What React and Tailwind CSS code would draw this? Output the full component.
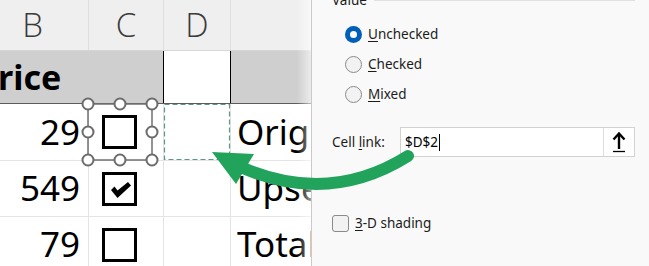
import React from "react";

const rows = [
  { n: "29", checked: false, e: "Original price", h: "h-[57px]" },
  { n: "549", checked: true, e: "Upsell", h: "h-[56px]" },
  { n: "79", checked: false, e: "Total", h: "h-[56px]" },
];

function Box({ checked }) {
  return (
    <div className="ml-[13px] w-[35px] h-[34px] border-[3px] border-black bg-white relative">
      {checked && (
        <svg width="29" height="28" viewBox="0 0 29 28" className="absolute left-0 top-0">
          <polygon points="6,15 9.5,11.5 12.5,15.5 23,7 26,10.5 12.5,23" fill="#000" />
        </svg>
      )}
    </div>
  );
}

function Radio({ selected, children }) {
  return (
    <div className="flex items-center h-[30px] pl-[13px]">
      {selected ? (
        <div className="w-[17px] h-[17px] rounded-full bg-[#005fb8] flex items-center justify-center">
          <div className="w-[7px] h-[7px] rounded-full bg-white" />
        </div>
      ) : (
        <div className="w-[17px] h-[17px] rounded-full border border-[#8a8a8a] bg-[#f2f2f2]" />
      )}
      <span className="ml-[6px] text-[13.5px] text-[#1b1b1b] whitespace-nowrap">{children}</span>
    </div>
  );
}

export default function App() {
  return (
    <div className="relative w-[649px] h-[266px] overflow-hidden flex bg-white font-['Noto_Sans',sans-serif]">
      {/* Spreadsheet */}
      <div className="relative w-[311px] flex-none overflow-hidden bg-white">
        {/* column header */}
        <div className="flex h-[51px] bg-[#efefef] border-b border-[#d6d6d6] text-[33px] font-light text-[#3a3a3a] font-['Open_Sans',sans-serif]">
          <div className="w-[89px] border-r border-[#dedede] flex items-center justify-end pr-[45px]">B</div>
          <div className="w-[75px] border-r border-[#dedede] flex items-center justify-center">C</div>
          <div className="w-[67px] border-r border-[#dedede] flex items-center justify-center">D</div>
          <div className="flex-1" />
        </div>
        {/* header row */}
        <div className="flex h-[53px] border-b border-[#5c5c5c]">
          <div className="w-[89px] bg-[#cfcfd0] flex items-center overflow-hidden">
            <span className="ml-[-23px] text-[34px] font-bold text-black whitespace-nowrap">Price</span>
          </div>
          <div className="w-[75px] bg-[#cfcfd0] border-r border-black" />
          <div className="w-[67px] bg-white border-r border-black" />
          <div className="flex-1 bg-[#cfcfd0]" />
        </div>
        {rows.map((r) => (
          <div key={r.n} className={`flex ${r.h} border-b border-[#e4e4e4] text-[35px] text-black`}>
            <div className="w-[89px] border-r border-[#e4e4e4] flex items-center justify-end pr-[8px]">{r.n}</div>
            <div className="w-[75px] border-r border-[#e4e4e4] flex items-center">
              <Box checked={r.checked} />
            </div>
            <div className="w-[67px] border-r border-[#e4e4e4]" />
            <div className="flex-1 flex items-center pl-[6px] whitespace-nowrap overflow-hidden">{r.e}</div>
          </div>
        ))}
        {/* selection overlay */}
        <svg className="absolute left-0 top-0 pointer-events-none" width="311" height="266">
          <rect x="164.5" y="104.5" width="65" height="55" fill="none" stroke="#5b9a80" strokeWidth="1.2" strokeDasharray="5 3" />
          <rect x="88" y="104" width="64" height="56" fill="none" stroke="#707070" strokeWidth="1.5" />
          {[
            [88, 104], [120, 104], [152, 104],
            [88, 132], [152, 132],
            [88, 160], [120, 160], [152, 160],
          ].map(([x, y]) => (
            <circle key={`${x}-${y}`} cx={x} cy={y} r="5.5" fill="#fff" stroke="#6b6b6b" strokeWidth="2" />
          ))}
        </svg>
        <div className="absolute right-0 top-0 bottom-0 w-[14px] bg-gradient-to-r from-transparent to-[#ffffff99]" />
      </div>
      <div className="w-px bg-[#cacaca] flex-none" />
      {/* Dialog panel */}
      <div className="flex-1 bg-[#f9f9f9] pl-[20px] pr-[14px] flex flex-col text-[#1b1b1b]">
        <div className="flex items-center mt-[-9px] h-[19px]">
          <span className="text-[13.5px] whitespace-nowrap">Value</span>
          <div className="ml-[7px] flex-1 h-px bg-[#e0e0e0]" />
        </div>
        <div className="mt-[9px] flex flex-col">
          <Radio selected><span className="underline underline-offset-2">U</span>nchecked</Radio>
          <Radio><span className="underline underline-offset-2">C</span>hecked</Radio>
          <Radio><span className="underline underline-offset-2">M</span>ixed</Radio>
        </div>
        <div className="mt-[18px] flex items-center">
          <span className="w-[68px] flex-none text-[13.5px] whitespace-nowrap">Cell <span className="underline underline-offset-2">l</span>ink:</span>
          <div className="flex-1 h-[30px] bg-white border border-[#d2d2d2] flex items-stretch">
            <div className="flex-1 flex items-center pl-[4px] text-[13.5px] text-black">
              <span>$D$2</span>
              <span className="w-px h-[17px] bg-black ml-px" />
            </div>
            <div className="w-[31px] border-l border-[#dcdcdc] flex items-center justify-center">
              <svg width="14" height="22" viewBox="0 0 14 22">
                <path d="M7 3 L7 18" stroke="#000" strokeWidth="2.4" />
                <path d="M1.5 8.5 L7 2.5 L12.5 8.5" stroke="#000" strokeWidth="2.4" fill="none" strokeLinejoin="miter" />
                <path d="M1 20.5 L13 20.5" stroke="#000" strokeWidth="1.3" />
              </svg>
            </div>
          </div>
        </div>
        <div className="mt-[56px] flex items-center">
          <div className="w-[17px] h-[17px] flex-none rounded-[3px] border border-[#8a8a8a] bg-[#f2f2f2]" />
          <span className="ml-[6px] text-[13.5px] whitespace-nowrap"><span className="underline underline-offset-2">3</span>-D shading</span>
        </div>
      </div>
      {/* green arrow */}
      <svg className="absolute left-0 top-0 pointer-events-none" width="649" height="266">
        <path d="M408 156 Q 330 205 243 168" fill="none" stroke="#22a35c" strokeWidth="12" strokeLinecap="round" />
        <polygon points="212,152 254,154 236,184" fill="#22a35c" />
      </svg>
    </div>
  );
}
